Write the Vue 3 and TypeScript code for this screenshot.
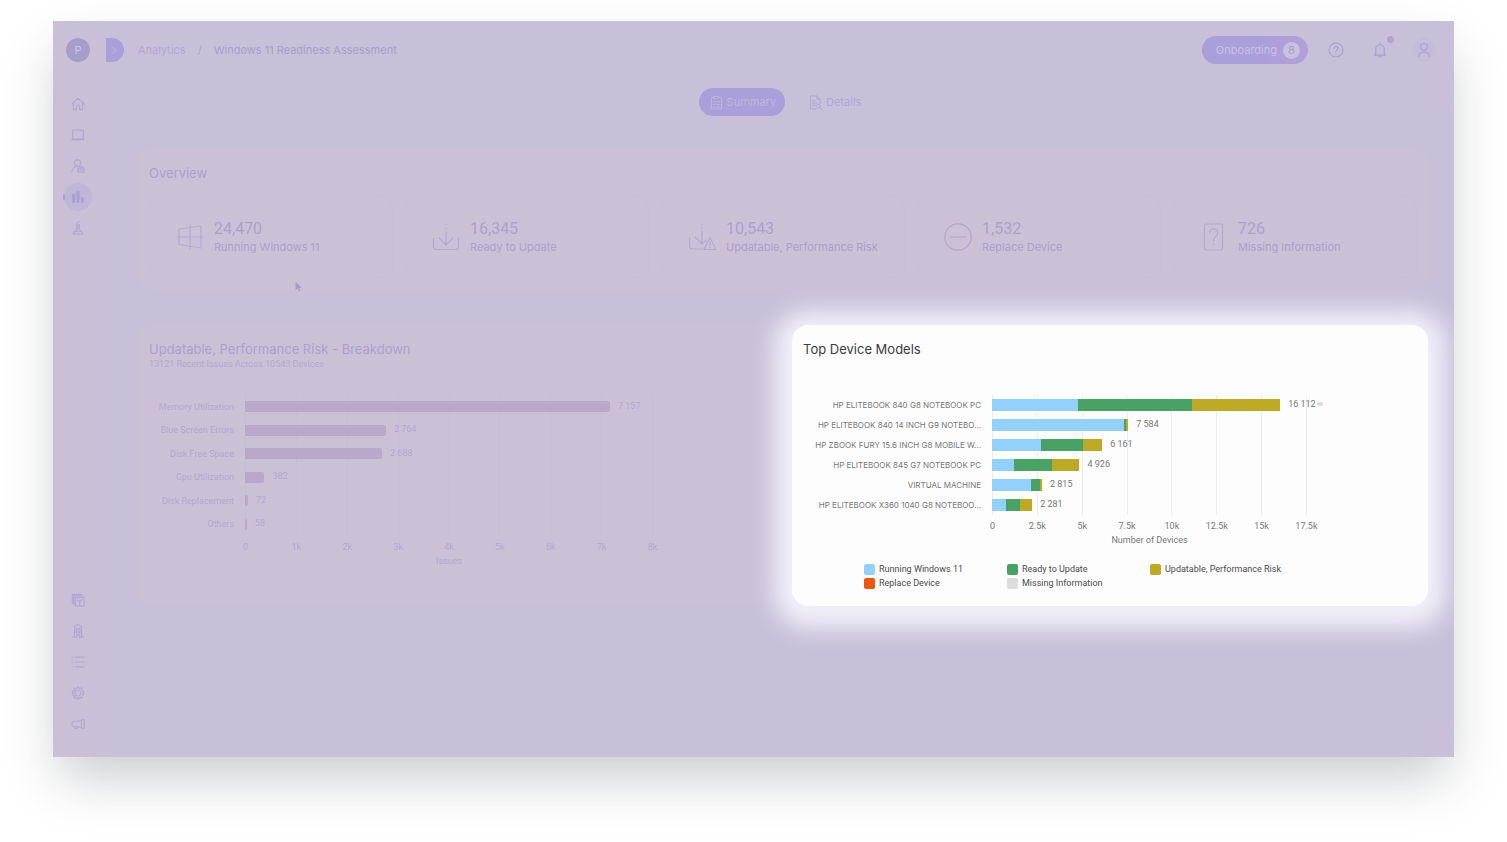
<script setup lang="ts">
interface NavItem {
  label: string
  paths: string[]
  solid?: boolean
  active?: boolean
}

interface Segment {
  kind: string
  value: number
}

interface ChartRow {
  label: string
  total: string
  segments: Segment[]
}

interface Chart {
  id: string
  title: string
  subtitle?: string
  axis: string
  max: number
  ticks: string[]
  rows: ChartRow[]
  legend?: { kind: string; label: string }[]
}

const primaryNav: NavItem[] = [
  { label: 'Home', paths: ['M1 8 8 1.500l7 6.500M2.800 6.800v7.700h3.400v-3.500a1.800 1.800 0 0 1 3.600 0v3.500h3.400V6.800'] },
  { label: 'Devices', paths: ['M2 2.500h12v10h-12zM.8 13.500h14.400'] },
  { label: 'Employees', paths: ['M7.500 1a3.600 3.600 0 1 1 0 7.200 3.600 3.600 0 0 1 0-7.200zM1 14.500c.5-3 2-5 4.500-6M8 10.500h7.200V15H8zM9.800 10.500c0-3 3.600-3 3.600 0M8 12.500h7.200'] },
  { label: 'Analytics', paths: ['M1.500 4.500h3.200v10H1.500zM6.400 1.500h3.200v13H6.400zM11.300 8.500h3.200v6h-3.200z'], solid: true, active: true },
  { label: 'Labs', paths: ['M6 4.500h4M6.500 4.500v5.500L2.500 13.500V15h11v-1.500L9.500 10V4.500M4.500 12.300h7M8 6v4M7 2.200h.6M9 .8h.6'] },
]

const secondaryNav: NavItem[] = [
  { label: 'Integrations', paths: ['M5 5h10v10H5zM3.200 13V3.200h10M1.500 11V1.500h9.800l1.500 1.500M2.300 12V2.300h9.500M7.500 8l2.500 2 3-2.500M10 10v3'] },
  { label: 'Companies', paths: ['M4 14.500V4.500C4 2.500 5.500 1 8 1s4 1.500 4 3.500v10M2 15h4.700v-2.800h2.600V15H14M6.500 4v6.500M9.500 4v6.500M5 6h6M5 9h6'] },
  { label: 'Logs', paths: ['M1.200 2.500h.6M4.500 2.500h10.500M1.200 8h.6M4.500 8h10.500M1.200 13.500h.6M4.500 13.500h10.500'] },
  { label: 'Settings', paths: ['M8 .8 9.700 2.700l2.600-.3.300 2.600 2 1.600L13.900 8l.700 1.400-2 1.600-.3 2.600-2.600-.3L8 15.200l-1.700-1.900-2.600.3-.3-2.600-2-1.600L2.100 8l-.7-1.400 2-1.600.3-2.600 2.600.3z', 'M8 4.600a3.400 3.400 0 1 1 0 6.800 3.400 3.400 0 0 1 0-6.800z'] },
  { label: 'Announcements', paths: ['M12 4 2 5.500C.5 6.500.5 9.500 2 10.500l10 1.500M12 3.200v9.600h3.200V3.200zM4 11c0 2.800 3.500 2.800 3.500.5'] },
]

const stats = [
  { value: '24,470', label: 'Running Windows 11', paths: ['M3 6l22-3v22L3 21.500zM1 14h26M14 2v24'] },
  { value: '16,345', label: 'Ready to Update', paths: ['M1.500 15v9a2.500 2.500 0 0 0 2.500 2.500h20a2.500 2.500 0 0 0 2.500-2.500v-9M14 9v13M7 15l7 7 7-7M14 1.500v.5M14 5v1'] },
  { value: '10,543', label: 'Updatable, Performance Risk', paths: ['M1.500 15v8a3 3 0 0 0 3 3h10M14 8v13M7 14l7 7 4-3.500M14 1.500v.5M14 5v1M22 14.500 16 26.500h12zM22 18.500v4M22 24.200v.5'] },
  { value: '1,532', label: 'Replace Device', paths: ['M14 .8a13.200 13.200 0 1 1 0 26.400A13.200 13.200 0 0 1 14 .8zM6.500 14h15.500'], alert: true },
  { value: '726', label: 'Missing Information', paths: ['M6.500 1h14a2 2 0 0 1 2 2v22a2 2 0 0 1-2 2h-14a2 2 0 0 1-2-2V3a2 2 0 0 1 2-2zM9.500 10c0-5.500 8-5.500 8 0 0 4-4 3.500-4 8M13.500 21v.5'] },
]

const issue = (label: string, value: number, total: string): ChartRow => ({
  label,
  total,
  segments: [{ kind: 'issue', value }],
})

const device = (label: string, total: string, running: number, ready: number, risk: number): ChartRow => ({
  label,
  total,
  segments: [
    { kind: 'running', value: running },
    { kind: 'ready', value: ready },
    { kind: 'risk', value: risk },
  ],
})

const charts: Chart[] = [
  {
    id: 'breakdown',
    title: 'Updatable, Performance Risk - Breakdown',
    subtitle: '13121 Recent Issues Across 10543 Devices',
    axis: 'Issues',
    max: 8000,
    ticks: ['0', '1k', '2k', '3k', '4k', '5k', '6k', '7k', '8k'],
    rows: [
      issue('Memory Utilization', 7157, '7 157'),
      issue('Blue Screen Errors', 2764, '2 764'),
      issue('Disk Free Space', 2688, '2 688'),
      issue('Cpu Utilization', 382, '382'),
      issue('Disk Replacement', 58, '72'),
      issue('Others', 40, '58'),
    ],
  },
  {
    id: 'models',
    title: 'Top Device Models',
    axis: 'Number of Devices',
    max: 17500,
    ticks: ['0', '2.5k', '5k', '7.5k', '10k', '12.5k', '15k', '17.5k'],
    rows: [
      device('HP ELITEBOOK 840 G8 NOTEBOOK PC', '16 112', 4760, 6370, 4880),
      device('HP ELITEBOOK 840 14 INCH G9 NOTEBO...', '7 584', 7310, 160, 100),
      device('HP ZBOOK FURY 15.6 INCH G8 MOBILE W...', '6 161', 2700, 2340, 1080),
      device('HP ELITEBOOK 845 G7 NOTEBOOK PC', '4 926', 1200, 2120, 1540),
      device('VIRTUAL MACHINE', '2 815', 2190, 500, 90),
      device('HP ELITEBOOK X360 1040 G8 NOTEBOO...', '2 281', 750, 820, 660),
    ],
    legend: [
      { kind: 'running', label: 'Running Windows 11' },
      { kind: 'ready', label: 'Ready to Update' },
      { kind: 'risk', label: 'Updatable, Performance Risk' },
      { kind: 'replace', label: 'Replace Device' },
      { kind: 'missing', label: 'Missing Information' },
    ],
  },
]

const share = (value: number, max: number): string => `${(value / max) * 100}%`
</script>

<template>
  <div class="page">
    <div class="window">
      <aside class="sidebar">
        <div class="brand"><span class="logo">P</span></div>
        <nav class="nav" aria-label="Main">
          <a v-for="item in primaryNav" :key="item.label" href="#" class="nav-item" :class="{ active: item.active }" :aria-label="item.label">
            <svg viewBox="0 0 16 16" class="nav-icon" :class="{ solid: item.solid }"><path v-for="d in item.paths" :key="d" :d="d" /></svg>
          </a>
        </nav>
        <nav class="nav nav-bottom" aria-label="Account">
          <a v-for="item in secondaryNav" :key="item.label" href="#" class="nav-item" :aria-label="item.label">
            <svg viewBox="0 0 16 16" class="nav-icon"><path v-for="d in item.paths" :key="d" :d="d" /></svg>
          </a>
        </nav>
      </aside>

      <main class="main">
        <header class="topbar">
          <button class="toggle" type="button" aria-label="Expand menu">
            <svg viewBox="0 0 8 10"><path d="M2 1.500 6 5 2 8.500" /></svg>
          </button>
          <div class="crumbs">
            <a href="#" class="crumb">Analytics</a>
            <span>/</span>
            <span class="current">Windows 11 Readiness Assessment</span>
          </div>
          <div class="actions">
            <button class="onboarding" type="button">Onboarding <span class="count">8</span></button>
            <button class="icon-button" type="button" aria-label="Help">
              <svg viewBox="0 0 16 16"><path d="M8 1a7 7 0 1 1 0 14A7 7 0 0 1 8 1zM6 6.500C6 3.700 10 3.800 10 6.400 10 8 8 7.800 8 9.700M8 11.800v.3" /></svg>
            </button>
            <button class="icon-button" type="button" aria-label="Notifications">
              <svg viewBox="0 0 16 16"><path d="M2.500 13.200h11M3.700 13V7.200a4.300 4.300 0 0 1 8.600 0V13M8 1v1.800M6.700 14.800h2.600" /></svg>
              <span class="dot"></span>
            </button>
            <button class="icon-button avatar" type="button" aria-label="Profile">
              <svg viewBox="0 0 16 16"><path d="M8 1.500a3.300 3.300 0 1 1 0 6.600 3.300 3.300 0 0 1 0-6.600zM2.500 14.500c.5-6 10.500-6 11 0" /></svg>
            </button>
          </div>
        </header>

        <div class="tabs" role="tablist">
          <button class="tab selected" type="button" role="tab" aria-selected="true">
            <svg viewBox="0 0 14 16"><path d="M4.500 2.500h-3v12.500h11V2.500h-3M4.500 1.500h5v2.500h-5zM3.500 7l.7.700L5.500 6.500M7 7h3.500M3.500 10l.7.700L5.500 9.500M7 10h3.500M3.500 13h1.500M7 13h3.500" /></svg>
            Summary
          </button>
          <button class="tab" type="button" role="tab" aria-selected="false">
            <svg viewBox="0 0 14 16"><path d="M7.500 15H1.500V1h7l3.500 3.500V9M8.500 1v3.500H12M3.500 6h3M3.500 8.500h5M3.500 11h3.500M10 9.800a2 2 0 1 1 0 4 2 2 0 0 1 0-4zM11.500 13.500 13.200 15" /></svg>
            Details
          </button>
        </div>

        <section class="card overview">
          <h2>Overview</h2>
          <div class="stats">
            <div v-for="stat in stats" :key="stat.label" class="stat">
              <svg viewBox="0 0 28 28" class="stat-icon" :class="{ alert: stat.alert }"><path v-for="d in stat.paths" :key="d" :d="d" /></svg>
              <div class="stat-text">
                <div class="stat-value">{{ stat.value }}</div>
                <div class="stat-label">{{ stat.label }}</div>
              </div>
            </div>
          </div>
        </section>

        <div class="charts">
          <section v-for="chart in charts" :key="chart.id" class="card chart" :class="chart.id">
            <header class="chart-head">
              <h2>{{ chart.title }}</h2>
              <p v-if="chart.subtitle">{{ chart.subtitle }}</p>
            </header>
            <div class="figure">
              <div class="labels">
                <div v-for="row in chart.rows" :key="row.label" class="row-label">{{ row.label }}</div>
              </div>
              <div class="plot-column">
                <div class="plot">
                  <div class="gridlines"><i v-for="tick in chart.ticks" :key="tick"></i></div>
                  <div v-for="row in chart.rows" :key="row.label" class="bar-row">
                    <span v-for="segment in row.segments" :key="segment.kind" class="segment" :class="segment.kind" :style="{ width: share(segment.value, chart.max) }"></span>
                    <span class="total">{{ row.total }}</span>
                    <span v-if="row.total === '16 112'" class="marker"></span>
                  </div>
                </div>
                <div class="ticks"><span v-for="tick in chart.ticks" :key="tick">{{ tick }}</span></div>
                <div class="axis">{{ chart.axis }}</div>
              </div>
            </div>
            <ul v-if="chart.legend" class="legend">
              <li v-for="entry in chart.legend" :key="entry.kind"><span class="swatch" :class="entry.kind"></span>{{ entry.label }}</li>
            </ul>
          </section>
        </div>
      </main>

      <svg class="pointer" viewBox="0 0 7 11"><path d="M.5.5v8.500l2-1.600 1.300 3 1.500-.7L4.100 7l2.500-.3z" /></svg>
    </div>
  </div>
</template>

<style>
body {
  margin: 0;
  background: #fff;
}
</style>

<style scoped>
.page {
  box-sizing: border-box;
  min-height: 100vh;
  padding: 21px 53px 85px;
  overflow: hidden;
  font-family: Inter, "Liberation Sans", sans-serif;
  color: #ac9fd0;
}

.window {
  position: relative;
  display: flex;
  min-height: calc(100vh - 106px);
  background: #c8c0d8;
  box-shadow: 0 26px 50px -6px rgba(40, 48, 58, 0.25);
}

h2,
p,
ul {
  margin: 0;
  padding: 0;
  font-weight: 400;
}

a {
  color: inherit;
  text-decoration: none;
}

button {
  padding: 0;
  border: 0;
  background: none;
  font: inherit;
  color: inherit;
}

svg {
  display: block;
  fill: none;
  stroke: currentColor;
  stroke-width: 1.2;
  stroke-linecap: round;
  stroke-linejoin: round;
}

.sidebar {
  display: flex;
  flex: none;
  flex-direction: column;
  box-sizing: border-box;
  width: 53px;
  padding: 0 3px 18px 0;
  background: #c9c0d7;
}

.brand {
  display: flex;
  align-items: center;
  justify-content: center;
  height: 58px;
  margin-bottom: 9px;
}

.logo {
  width: 24px;
  border-radius: 50%;
  background: #a79dcb;
  color: #cdc5dc;
  font-size: 11px;
  line-height: 24px;
  text-align: center;
}

.nav {
  display: flex;
  flex-direction: column;
  align-items: center;
}

.nav-bottom {
  margin-top: auto;
}

.nav-item {
  position: relative;
  display: flex;
  align-items: center;
  justify-content: center;
  width: 28px;
  height: 31px;
  color: #b2a6d2;
}

.nav-icon {
  width: 14px;
  height: 14px;
  stroke-width: 1.3;
}

.nav-icon.solid {
  fill: currentColor;
  stroke: none;
}

.active {
  height: 28px;
  margin: 2px 0 1px;
  border-radius: 50%;
  background: #c0b6d8;
  color: #a99dd1;
}

.active::before {
  position: absolute;
  left: -1px;
  width: 2px;
  height: 6px;
  border-radius: 1px;
  background: #a99dd1;
  content: "";
}

.main {
  flex: 1;
  min-width: 0;
  overflow: hidden;
  padding-bottom: 30px;
}

.topbar {
  display: flex;
  align-items: center;
  height: 58px;
  padding-right: 18px;
}

.toggle {
  display: flex;
  align-items: center;
  width: 18px;
  height: 24px;
  padding-left: 5px;
  border-radius: 0 12px 12px 0;
  background: #ab9fda;
  color: #b9aedf;
}

.toggle svg {
  width: 7px;
  height: 9px;
}

.crumbs {
  display: flex;
  gap: 12px;
  margin-left: 14px;
  font-size: 11px;
  white-space: nowrap;
}

.crumb {
  color: #b4a8d3;
}

.current {
  color: #a99dcf;
}

.actions {
  display: flex;
  align-items: center;
  gap: 20px;
  margin-left: auto;
}

.onboarding {
  display: flex;
  align-items: center;
  gap: 6px;
  height: 28px;
  margin-right: -4px;
  padding: 0 8px 0 14px;
  border-radius: 14px;
  background: linear-gradient(90deg, #a99fdb 50%, #b29fd8);
  color: #cac1e1;
  font-size: 11px;
}

.count {
  width: 17px;
  border-radius: 50%;
  background: #c9c0dd;
  color: #a99dcf;
  line-height: 17px;
}

.icon-button {
  position: relative;
  display: flex;
  align-items: center;
  justify-content: center;
  width: 24px;
  height: 24px;
}

.icon-button svg {
  width: 16px;
  height: 16px;
}

.avatar {
  border-radius: 50%;
  background: #c5bcd7;
}

.dot {
  position: absolute;
  top: -2px;
  right: -2px;
  width: 7px;
  height: 7px;
  border-radius: 50%;
  background: #b99dcb;
}

.tabs {
  display: flex;
  justify-content: center;
  gap: 24px;
  padding-top: 9px;
}

.tab {
  display: flex;
  align-items: center;
  gap: 4px;
  height: 28px;
  color: #b1a5d3;
  font-size: 11px;
}

.tab svg {
  width: 13px;
  height: 15px;
  stroke-width: 1;
}

.selected {
  padding: 0 9px 0 11px;
  border-radius: 14px;
  background: #aa9fda;
  color: #c0b6de;
}

.card {
  border-radius: 16px;
  background: #cac1d7;
}

.overview {
  margin: 32px 26px 35px 32px;
  padding: 15px 11px 12px;
}

.overview h2 {
  margin-bottom: 12px;
  font-size: 13px;
  line-height: 20px;
}

.stats {
  display: grid;
  grid-template-columns: repeat(5, 1fr);
  gap: 12px;
}

.stat {
  display: flex;
  align-items: center;
  gap: 10px;
  box-sizing: border-box;
  height: 83px;
  padding-left: 26px;
  border: 1px solid #c8bfd6;
  border-radius: 12px;
  white-space: nowrap;
}

.stat-icon {
  flex: none;
  width: 28px;
  height: 28px;
  color: #b5a9d3;
}

.stat-icon.alert {
  color: #b9a0cd;
}

.stat-text {
  padding-top: 2px;
}

.stat-value {
  font-family: Roboto, "Liberation Sans", sans-serif;
  font-size: 16px;
  line-height: 18px;
}

.stat-label {
  font-size: 11px;
  line-height: 18px;
}

.charts {
  display: grid;
  grid-template-columns: repeat(2, minmax(0, 1fr));
  gap: 18px;
  margin: 0 26px 0 32px;
}

.chart {
  padding: 15px 11px 16px;
  font-family: Roboto, "Liberation Sans", sans-serif;
  font-size: 9px;
}

.chart-head {
  min-height: 55px;
}

.chart-head h2 {
  font-family: Inter, "Liberation Sans", sans-serif;
  font-size: 13px;
  line-height: 18px;
}

.chart-head p {
  line-height: 12px;
}

.figure {
  display: flex;
  gap: 11px;
  padding-right: 110px;
}

.labels {
  display: flex;
  flex: none;
  flex-direction: column;
  text-align: right;
  white-space: nowrap;
}

.row-label {
  display: flex;
  flex: 1;
  align-items: center;
  justify-content: flex-end;
}

.plot-column {
  flex: 1;
  min-width: 0;
}

.plot {
  position: relative;
  display: flex;
  flex-direction: column;
}

.breakdown .labels {
  width: 85px;
}

.breakdown .labels,
.breakdown .plot {
  height: 141px;
}

.models .labels {
  width: 178px;
  font-family: Inter, "Liberation Sans", sans-serif;
  font-size: 8px;
}

.models .labels,
.models .plot {
  height: 120px;
}

.gridlines {
  position: absolute;
  inset: 0;
  display: flex;
  justify-content: space-between;
}

.gridlines i {
  width: 1px;
  background: #c5bcd6;
}

.bar-row {
  position: relative;
  display: flex;
  flex: 1;
  align-items: center;
}

.segment {
  flex: none;
  height: 11px;
}

.models .segment {
  height: 12px;
}

.total {
  flex: none;
  padding-bottom: 2px;
  margin-left: 8px;
}

.marker {
  flex: none;
  width: 6px;
  height: 4px;
  margin: 0 0 2px 1px;
  border-radius: 2px;
  background: #dcdcdc;
}

.ticks {
  display: flex;
  justify-content: space-between;
  margin-top: 5px;
  line-height: 12px;
}

.ticks span {
  display: flex;
  justify-content: center;
  width: 1px;
}

.axis {
  margin-top: 2px;
  line-height: 12px;
  text-align: center;
}

.breakdown {
  color: #b3a7d3;
}

.breakdown h2 {
  color: #ac9fd0;
}

.models {
  background: #fdfdfd;
  box-shadow: 0 4px 22px 18px #f1effb;
  color: #777;
}

.models h2 {
  color: #3c3c3c;
}

.models .gridlines i {
  background: #ededee;
}

.legend {
  display: grid;
  grid-template-columns: repeat(3, 143px);
  margin: 16px 0 0 61px;
  color: #4a4a4a;
  line-height: 14px;
  list-style: none;
  white-space: nowrap;
}

.legend li {
  display: flex;
  align-items: center;
  gap: 4px;
}

.swatch {
  width: 11px;
  height: 11px;
  border-radius: 2px;
}

.issue {
  border-radius: 0 2px 2px 0;
  background: #b8a9cb;
}

.running {
  background: #93d1fd;
}

.ready {
  background: #4aa164;
}

.risk {
  background: #bea927;
}

.replace {
  background: #ea580f;
}

.missing {
  background: #dcdcdc;
}

.pointer {
  position: absolute;
  top: 260px;
  left: 242px;
  width: 7px;
  height: 11px;
  fill: #a99dcf;
  stroke: none;
}
</style>
